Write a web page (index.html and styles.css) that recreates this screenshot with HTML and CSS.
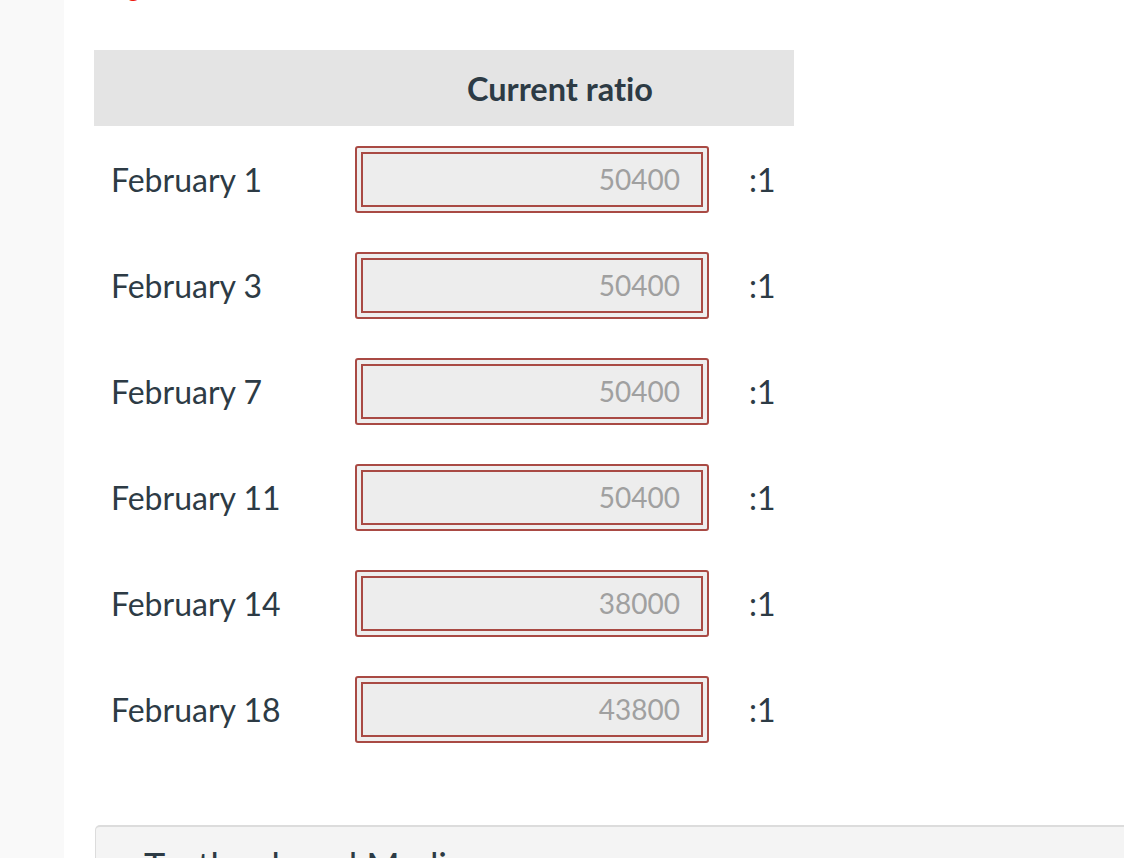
FILE: index.html
```html
<!DOCTYPE html>
<html>
<head>
<meta charset="utf-8">
<link rel="stylesheet" href="styles.css">
</head>
<body>
<div class="page">
  <aside class="side"></aside>
  <main class="main">
    <p class="warn">Figures are, in all cases</p>
    <div class="table">
      <div class="thead">
        <div class="th-empty"></div>
        <div class="th">Current ratio</div>
      </div>
      <div class="row">
        <div class="label">February 1</div>
        <div class="input"><div class="inner">50400</div></div>
        <div class="suffix">:1</div>
      </div>
      <div class="row">
        <div class="label">February 3</div>
        <div class="input"><div class="inner">50400</div></div>
        <div class="suffix">:1</div>
      </div>
      <div class="row">
        <div class="label">February 7</div>
        <div class="input"><div class="inner">50400</div></div>
        <div class="suffix">:1</div>
      </div>
      <div class="row">
        <div class="label">February 11</div>
        <div class="input"><div class="inner">50400</div></div>
        <div class="suffix">:1</div>
      </div>
      <div class="row">
        <div class="label">February 14</div>
        <div class="input"><div class="inner">38000</div></div>
        <div class="suffix">:1</div>
      </div>
      <div class="row">
        <div class="label">February 18</div>
        <div class="input"><div class="inner">43800</div></div>
        <div class="suffix">:1</div>
      </div>
    </div>
    <section class="media">
      <h2 class="media-title">Textbook and Media</h2>
    </section>
  </main>
</div>
</body>
</html>
```

FILE: styles.css
```css
* { box-sizing: border-box; }
html, body { margin: 0; padding: 0; }
body {
  font-family: Lato, "Open Sans", sans-serif;
  font-variant-ligatures: none;
  color: #2d3b45;
  background: #fff;
  width: 1124px;
  height: 858px;
  overflow: hidden;
}
.page {
  display: flex;
  height: 858px;
}
.side {
  width: 64px;
  flex: none;
  background: #f9f9f9;
}
.main {
  flex: 1;
  padding-left: 30px;
  overflow: hidden;
}
.warn {
  margin: -28px 0 0 0;
  padding-left: 12px;
  height: 28px;
  line-height: 28px;
  font-size: 26px;
  color: #ee1c12;
}
.table {
  width: 700px;
  margin-top: 50px;
}
.thead {
  display: flex;
  height: 76px;
  background: #e4e4e4;
  align-items: center;
}
.th-empty { width: 373px; }
.th {
  font-weight: 700;
  font-size: 32.5px;
  color: #2d3b45;
}
.row {
  display: flex;
  align-items: center;
  height: 106px;
}
.label {
  width: 261px;
  padding-left: 17px;
  font-size: 32px;
  color: #2d3b45;
}
.input {
  width: 354px;
  height: 67px;
  border: 2px solid #a94a44;
  border-radius: 3px;
  background: #eeeeee;
  padding: 4px;
}
.inner {
  height: 100%;
  border: 2px solid #a94a44;
  background: #ededed;
  padding-right: 21px;
  font-size: 28px;
  color: #a0a0a0;
  display: flex;
  align-items: center;
  justify-content: flex-end;
}
.suffix {
  margin-left: 40px;
  font-size: 32px;
  color: #2d3b45;
}
.media {
  margin-top: 63px;
  margin-left: 1px;
  border-top: 2px solid #dcdcdc;
  border-left: 1px solid #dcdcdc;
  border-top-left-radius: 5px;
  background: #f4f4f4;
  height: 120px;
  padding: 16px 0 0 48px;
}
.media-title {
  margin: 0;
  font-weight: 400;
  font-size: 36px;
  color: #2d3b45;
}
```
